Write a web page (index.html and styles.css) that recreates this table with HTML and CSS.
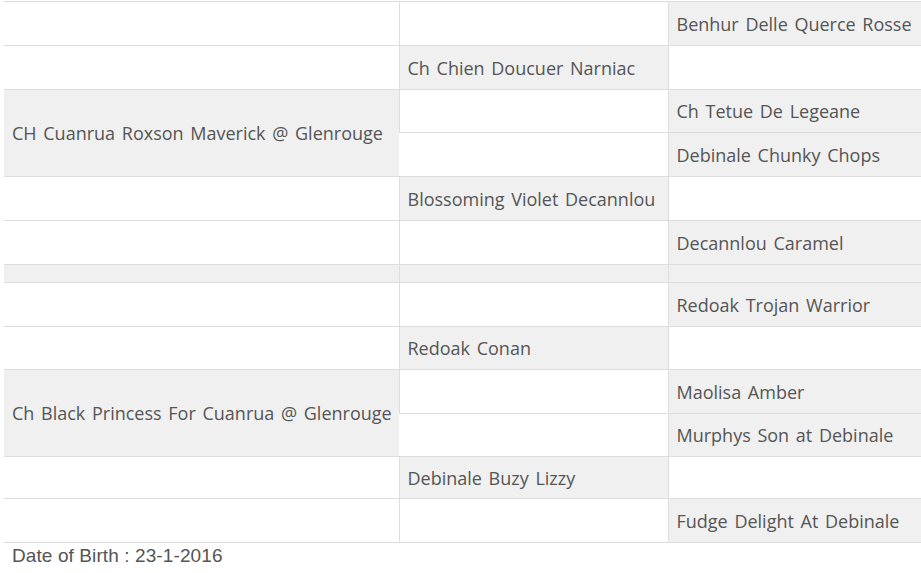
FILE: index.html
```html
<!DOCTYPE html>
<html>
<head>
<meta charset="utf-8">
<link rel="stylesheet" href="styles.css">
</head>
<body>
<div class="wrap">
<table class="pedigree">
  <tr class="r44"><td></td><td></td><td class="g">Benhur Delle Querce Rosse</td></tr>
  <tr class="r44"><td></td><td class="g">Ch Chien Doucuer Narniac</td><td></td></tr>
  <tr class="r43"><td class="g" rowspan="2">CH Cuanrua Roxson Maverick @ Glenrouge</td><td></td><td class="g">Ch Tetue De Legeane</td></tr>
  <tr class="r44"><td></td><td class="g">Debinale Chunky Chops</td></tr>
  <tr class="r44"><td></td><td class="g">Blossoming Violet Decannlou</td><td></td></tr>
  <tr class="r44"><td></td><td></td><td class="g">Decannlou Caramel</td></tr>
  <tr class="spacer"><td class="g"></td><td class="g"></td><td class="g"></td></tr>
  <tr class="r44"><td></td><td></td><td class="g">Redoak Trojan Warrior</td></tr>
  <tr class="r43"><td></td><td class="g">Redoak Conan</td><td></td></tr>
  <tr class="r44"><td class="g" rowspan="2">Ch Black Princess For Cuanrua @ Glenrouge</td><td></td><td class="g">Maolisa Amber</td></tr>
  <tr class="r43"><td></td><td class="g">Murphys Son at Debinale</td></tr>
  <tr class="r42"><td></td><td class="g">Debinale Buzy Lizzy</td><td></td></tr>
  <tr class="r44"><td></td><td></td><td class="g">Fudge Delight At Debinale</td></tr>
</table>
<p class="dob">Date of Birth : 23-1-2016</p>
</div>
</body>
</html>
```
FILE: styles.css
```css
html, body {
  margin: 0;
  padding: 0;
  overflow: hidden;
  background: #fff;
}
.wrap {
  padding: 1px 0 0 4px;
  width: 940px;
}
.pedigree {
  border-collapse: collapse;
  width: 936px;
  table-layout: fixed;
  font-family: "Open Sans", "Noto Sans", sans-serif;
  font-size: 18px;
  color: #555;
}
.pedigree td {
  border-top: 1px solid #ddd;
  border-bottom: 1px solid #ddd;
  padding: 0 8px;
  vertical-align: middle;
  white-space: nowrap;
  word-spacing: 2px;
  overflow: hidden;
}
.pedigree td:first-child {
  width: 395px;
  box-sizing: border-box;
}
.pedigree td + td {
  border-left: 1px solid #ddd;
}
.pedigree tr:first-child td:nth-child(2) {
  width: 269px;
  box-sizing: border-box;
}
.pedigree td.g {
  background: #f0f0f0;
}
.r44 { height: 44px; }
.r43 { height: 43px; }
.r42 { height: 42px; }
.spacer { height: 18px; }
.dob {
  margin: 0;
  padding: 2px 0 0 8px;
  font-family: "Liberation Sans", Arial, sans-serif;
  font-size: 19px;
  letter-spacing: 0.1px;
  color: #555;
}
```
